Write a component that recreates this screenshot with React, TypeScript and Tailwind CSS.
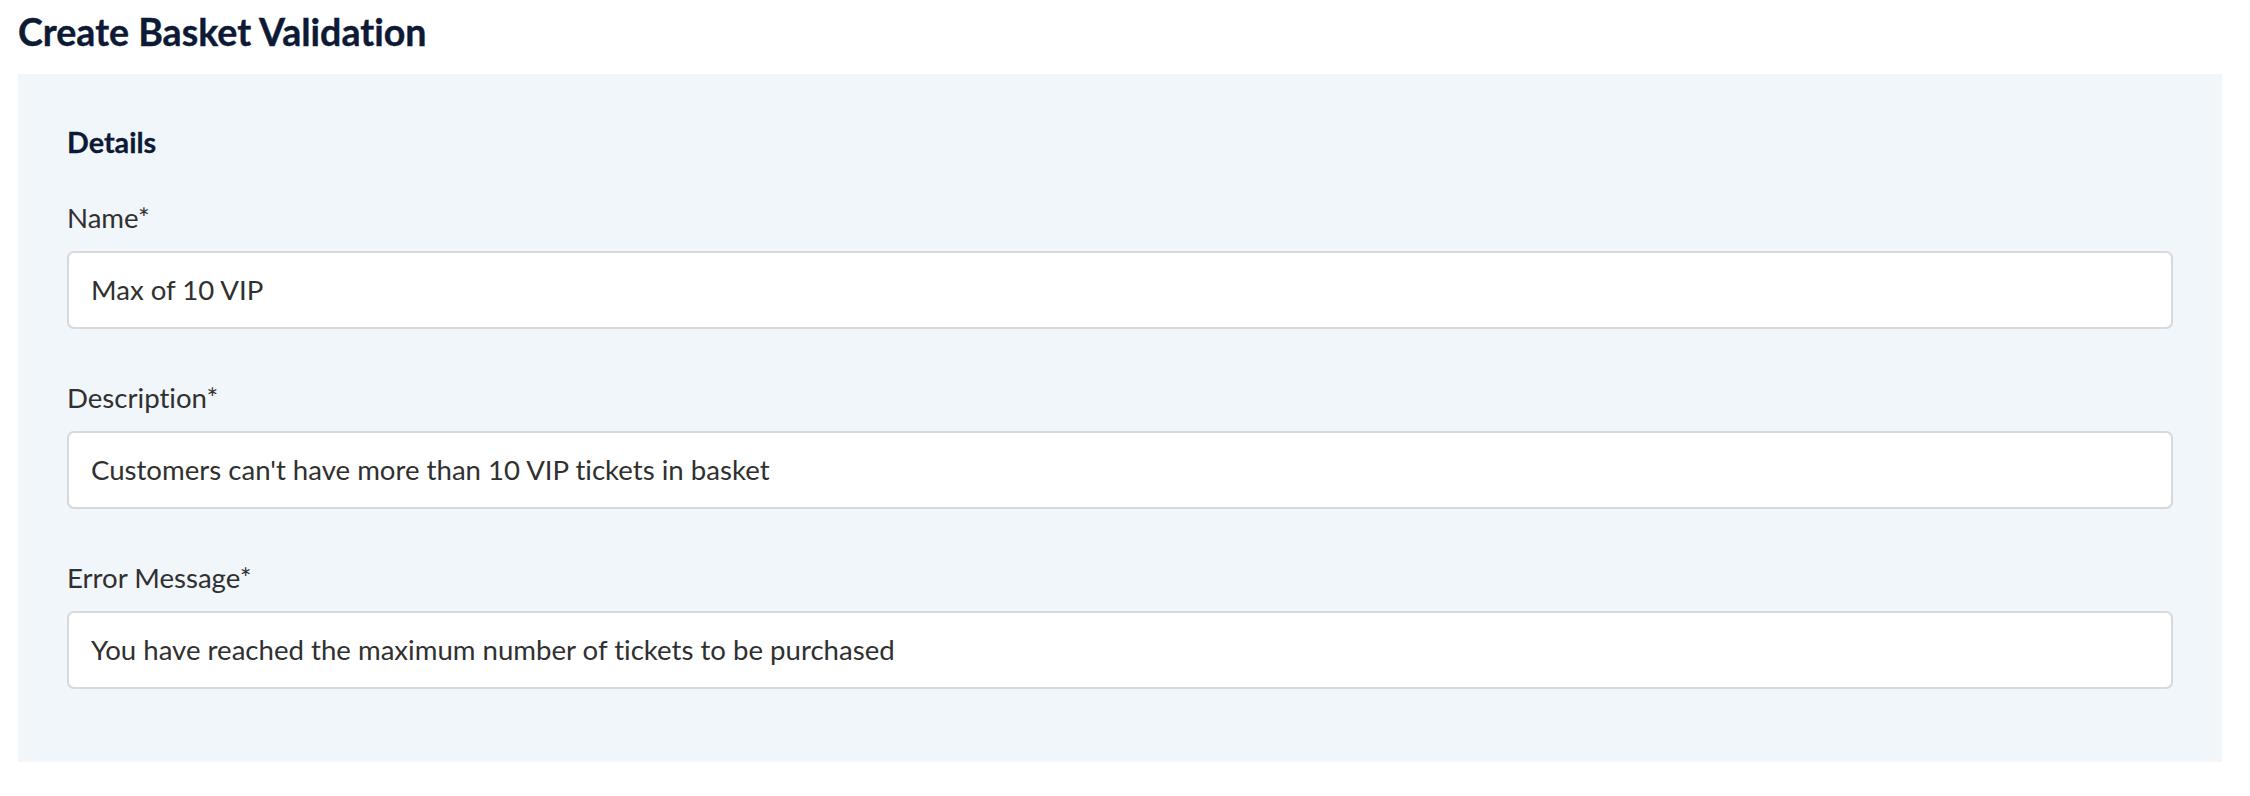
import React from "react";

const fields = [
  { label: "Name*", value: "Max of 10 VIP" },
  { label: "Description*", value: "Customers can't have more than 10 VIP tickets in basket" },
  { label: "Error Message*", value: "You have reached the maximum number of tickets to be purchased" },
];

export default function App() {
  return (
    <div className="w-[2250px] h-[796px] bg-white font-['Lato','Liberation_Sans',sans-serif] [font-variant-ligatures:none]">
      <h1 className="pl-[18px] pt-[10px] text-[37.6px] leading-[44px] font-bold text-[#0d1a35] [-webkit-text-stroke:0.4px_#0d1a35]">
        Create Basket Validation
      </h1>
      <section className="mt-[20px] ml-[18px] w-[2204px] bg-[#f1f6fa] px-[49px] pt-[52px] pb-[73px]">
        <h2 className="text-[28.75px] leading-[32px] font-bold text-[#0d1a35] [-webkit-text-stroke:0.3px_#0d1a35]">Details</h2>
        {fields.map((f, i) => (
          <div key={f.label} className={i === 0 ? "mt-[44px]" : "mt-[53px]"}>
            <label className="block text-[27.6px] leading-[32px] text-[#303030]">{f.label}</label>
            <div className="mt-[17px] h-[78px] flex items-center rounded-[7px] border-2 border-[#d6d8db] bg-white px-[22px] text-[27.6px] text-[#303030]">
              {f.value}
            </div>
          </div>
        ))}
      </section>
    </div>
  );
}
